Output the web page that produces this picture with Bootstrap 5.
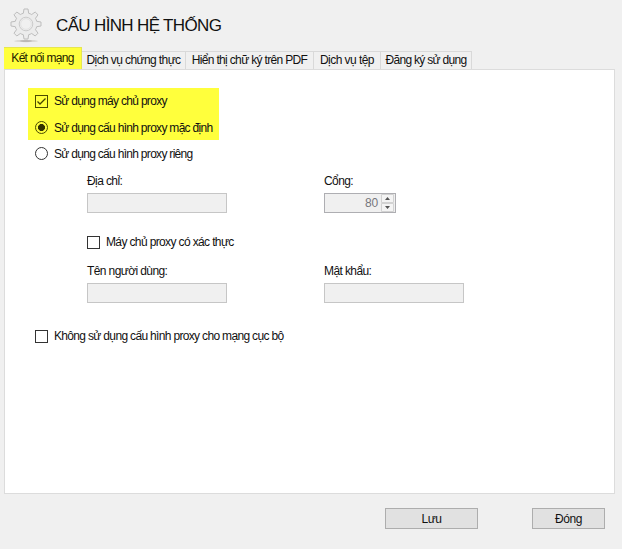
<!DOCTYPE html>
<html lang="vi">
<head>
<meta charset="utf-8">
<meta name="viewport" content="width=device-width, initial-scale=1">
<title>Cấu hình hệ thống</title>
<link href="https://cdn.jsdelivr.net/npm/bootstrap@5.3.0/dist/css/bootstrap.min.css" rel="stylesheet">
<style>
body{width:622px;height:549px;overflow:hidden;background:#f0f0f0;color:#111;font:12px/16px "Liberation Sans",Arial,sans-serif;letter-spacing:-.7px;white-space:nowrap}
.title-row{height:50px;padding-left:8px}
.title-row h1{font-size:17px;line-height:20px;font-weight:400;letter-spacing:-.65px;margin:1px 0 0 13px}
.settings-tabs{height:22px;margin:-3px 0 0 4px;border:0;position:relative;z-index:1}
.settings-tabs .nav-link{height:18px;padding:0;border:1px solid #d9d9d9;border-left-width:0;border-bottom:0;border-radius:0;color:#111;text-align:center;line-height:17px;background:#f0f0f0;margin:0}
.settings-tabs .nav-link.active{height:22px;background:#ffff3c;border-color:#e6e650;line-height:20px;color:#222200}
.t1{width:78px}.t2{width:104px;letter-spacing:-.6px}.t3{width:128px;letter-spacing:-.66px}.t4{width:67px;letter-spacing:-.55px}.t5{width:91px}
.panel{width:611px;height:425px;margin:0 0 0 4px;background:#fff;border:1px solid #dcdcdc;padding:18px 0 0 23px}
.marked{width:191px;height:52px;background:#ffff3c}
.option{height:26px;padding-left:7px;gap:6px}
.form-check-input{width:13px;height:13px;margin:0;border:1px solid #333;background-color:transparent;flex:none}
.form-check-input[type=checkbox]{border-radius:0}
.form-check-input:checked{background-color:transparent;border-color:#4a4a00}
.form-check-input:checked[type=checkbox]{background-image:url("data:image/svg+xml,%3Csvg xmlns='http://www.w3.org/2000/svg' viewBox='0 0 11 11'%3E%3Cpath d='M1.5 5.5 4 8 9.5 2.5' fill='none' stroke='%23444400' stroke-width='1.3'/%3E%3C/svg%3E")}
.form-check-input:checked[type=radio]{background-image:radial-gradient(circle,#333300 0 3.2px,transparent 3.8px)}
.custom-option span{padding-top:2px}
.fields{margin-left:59px;padding-top:7px}
.fields .form-label{display:block;margin:0;height:20px;letter-spacing:-.6px}
.fields .form-control{width:140px;height:20px;padding:0;border:1px solid #c6c6c6;border-radius:0;background:#f0f0f0}
.col-a{width:237px}
.spin{width:72px;height:20px;border:1px solid #aeaeb2;background:#f0f0f0;color:#77777d;letter-spacing:-.2px;line-height:14px}
.spin span{margin-right:3px;padding-bottom:1px}
.spin svg{display:block}
.auth-option{letter-spacing:-.63px}
.local-option{margin-top:20px;letter-spacing:-.67px}
.win-btn{height:21px;border:1px solid #adadad;border-radius:0;background:#e1e1e1;padding:1px 0 0;font-size:12px;line-height:19px;letter-spacing:-.45px;color:#111}
.save-btn{width:93px}.close-btn{width:73px;margin-left:54px}
.actions{margin-top:14px;padding-left:385px}
</style>
</head>
<body>
<header class="title-row d-flex align-items-center">
<svg width="35" height="40" viewBox="-18 -19 35 40"><ellipse cx="0" cy="17" rx="12" ry="1.2" fill="#d5d3d0"/><ellipse cx="0" cy="17" rx="6" ry=".8" fill="#b3b0ad"/><path d="M-2.7-10.7-2-15H2L2.7-10.7A11 11 0 0 1 5.66-9.47L9.19-12 12-9.19 9.47-5.66A11 11 0 0 1 10.7-2.7L15-2V2L10.7 2.7A11 11 0 0 1 9.47 5.66L12 9.19 9.19 12 5.66 9.47A11 11 0 0 1 2.7 10.7L2 15H-2L-2.7 10.7A11 11 0 0 1-5.66 9.47L-9.19 12-12 9.19-9.47 5.66A11 11 0 0 1-10.7 2.7L-15 2V-2L-10.7-2.7A11 11 0 0 1-9.47-5.66L-12-9.19-9.19-12-5.66-9.47A11 11 0 0 1-2.7-10.7Z" fill="#ececec" stroke="#bdbdbd" stroke-linejoin="round"/><circle r="6.8" fill="#ededed" stroke="#c6c6c6" stroke-width=".9"/><circle r="5.3" fill="#f0f0f0" stroke="#dedede" stroke-width=".7"/></svg>
<h1>CẤU HÌNH HỆ THỐNG</h1>
</header>
<nav class="settings-tabs nav nav-tabs align-items-end flex-nowrap">
<a class="nav-link active t1">Kết nối mạng</a><a class="nav-link t2">Dịch vụ chứng thực</a><a class="nav-link t3">Hiển thị chữ ký trên PDF</a><a class="nav-link t4">Dịch vụ tệp</a><a class="nav-link t5">Đăng ký sử dụng</a>
</nav>
<main class="panel">
<div class="marked">
<label class="option d-flex align-items-center"><input class="form-check-input" type="checkbox" checked><span>Sử dụng máy chủ proxy</span></label>
<label class="option custom-option d-flex align-items-center"><input class="form-check-input" type="radio" name="mode" checked><span>Sử dụng cấu hình proxy mặc định</span></label>
</div>
<label class="option custom-option d-flex align-items-center"><input class="form-check-input" type="radio" name="mode"><span>Sử dụng cấu hình proxy riêng</span></label>
<div class="fields">
<div class="d-flex"><div class="col-a"><label class="form-label">Địa chỉ:</label><input class="form-control" disabled></div>
<div><label class="form-label">Cổng:</label><div class="spin d-flex justify-content-end align-items-center"><span>80</span><svg width="14" height="18"><path d="M.5.5h12v8H.5zM.5 9.500h12v8H.5z" fill="#f4f4f4" stroke="#d2d2d2"/><path d="M4 6l2.500-3L9 6zM4 12h5l-2.500 3z" fill="#555"/></svg></div></div></div>
<label class="option auth-option d-flex align-items-center ps-0 mt-3"><input class="form-check-input" type="checkbox"><span>Máy chủ proxy có xác thực</span></label>
<div class="d-flex mt-2"><div class="col-a"><label class="form-label">Tên người dùng:</label><input class="form-control" disabled></div>
<div><label class="form-label">Mật khẩu:</label><input class="form-control" disabled></div></div>
</div>
<label class="option local-option d-flex align-items-center"><input class="form-check-input" type="checkbox"><span>Không sử dụng cấu hình proxy cho mạng cục bộ</span></label>
</main>
<footer class="actions d-flex"><button class="btn win-btn save-btn">Lưu</button><button class="btn win-btn close-btn">Đóng</button></footer>
<script src="https://cdn.jsdelivr.net/npm/bootstrap@5.3.0/dist/js/bootstrap.bundle.min.js"></script>
</body>
</html>
